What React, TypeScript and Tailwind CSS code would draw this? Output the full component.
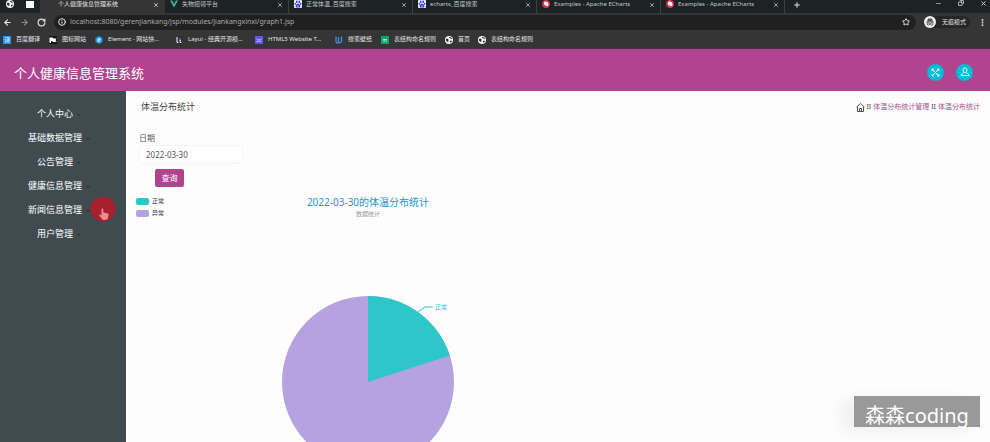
import type { ReactNode } from 'react';
import { ArrowLeft, ArrowRight, RotateCw, Info, Star, EllipsisVertical, Minus, Copy, X, Plus } from 'lucide-react';

function Globe() {
  return (
    <svg viewBox="0 0 16 16" className="size-2 shrink-0" aria-hidden="true">
      <circle cx="8" cy="8" r="8" fill="#f1f1f1" />
      <path d="M2 6c3-1 5 0 5 2s-1 2 0 4c-3 0-6-2-5-6zM8 2c0 2 2 2 3 3s2 1 3 0c-1-2-3-3-6-3zM10 10c1-1 3-1 4 0-1 2-2 3-4 3z" fill="#303030" />
    </svg>
  );
}

function Paw() {
  return (
    <svg viewBox="0 0 16 16" className="size-2 shrink-0" aria-hidden="true">
      <rect width="16" height="16" rx="2" fill="#f3f4ff" />
      <g fill="#3434dd">
        <ellipse cx="5.5" cy="3.5" rx="1.7" ry="2.4" />
        <ellipse cx="10.5" cy="3.5" rx="1.7" ry="2.4" />
        <ellipse cx="2.6" cy="7.5" rx="1.6" ry="2.2" />
        <ellipse cx="13.4" cy="7.5" rx="1.6" ry="2.2" />
        <path d="M8 7c2 0 5 3.500 5 6 0 2-3 2-5 2s-5 0-5-2c0-2.500 3-6 5-6z" />
      </g>
      <circle cx="8" cy="12" r="1.500" fill="#f3f4ff" />
    </svg>
  );
}

function Vue() {
  return (
    <svg viewBox="0 0 16 16" className="size-2 shrink-0" aria-hidden="true">
      <path d="M0 1h4l4 7 4-7h4L8 15z" fill="#41b883" />
      <path d="M4 1h2.500L8 4l1.500-3H12L8 8z" fill="#35495e" />
    </svg>
  );
}

function Apache() {
  return (
    <svg viewBox="0 0 16 16" className="size-2 shrink-0" aria-hidden="true">
      <circle cx="8" cy="8" r="8" fill="#d62f50" />
      <path d="M7 3c4 0 6 3 6 6s-2 4-4 3-5-2-5-5 1-4 3-4z" fill="#fff" />
    </svg>
  );
}

const tabs: { title: string; icon: ReactNode }[] = [
  { title: '失物招领平台', icon: <Vue /> },
  { title: '正常体温_百度搜索', icon: <Paw /> },
  { title: 'echarts_百度搜索', icon: <Paw /> },
  { title: 'Examples - Apache ECharts', icon: <Apache /> },
  { title: 'Examples - Apache ECharts', icon: <Apache /> },
];

const bookmarks: { title: string; width: string; icon: ReactNode }[] = [
  {
    title: '百度翻译',
    width: 'w-[46px]',
    icon: <span className="flex size-2 shrink-0 items-center justify-center bg-[#2492ef] text-[6px] leading-none">译</span>,
  },
  {
    title: '图标网站',
    width: 'w-[46px]',
    icon: (
      <svg viewBox="0 0 16 16" className="size-2 shrink-0" aria-hidden="true">
        <rect width="16" height="16" fill="#161616" />
        <path d="M1 3h6l2 2h6l-2 3 2 4H8l-2-2H4v4H1z" fill="#fff" />
      </svg>
    ),
  },
  {
    title: 'Element - 网站快...',
    width: 'w-20',
    icon: (
      <svg viewBox="0 0 16 16" className="size-2 shrink-0" aria-hidden="true">
        <path d="M8 0l7 4v8l-7 4-7-4V4z" fill="#1f9cf0" />
        <path d="M11 5L6 6v5l5-1M6 8l5-1" fill="none" stroke="#fff" strokeWidth="1.500" />
      </svg>
    ),
  },
  {
    title: 'Layui - 经典开源模...',
    width: 'w-20',
    icon: (
      <svg viewBox="0 0 16 16" className="size-2 shrink-0" aria-hidden="true">
        <rect width="16" height="16" fill="#2b3038" />
        <path d="M4 2v11h3M10 5v2M9 9h2l-1 4h3" fill="none" stroke="#fff" strokeWidth="2" />
      </svg>
    ),
  },
  {
    title: 'HTML5 Website T...',
    width: 'w-20',
    icon: (
      <svg viewBox="0 0 16 16" className="size-2 shrink-0" aria-hidden="true">
        <rect width="16" height="16" fill="#6253e0" />
        <path d="M3 5l3 4 2-3 2 3 3-4M3 11h10" fill="none" stroke="#c9c2ff" strokeWidth="1.500" />
      </svg>
    ),
  },
  {
    title: '搜索壁纸',
    width: 'w-[46px]',
    icon: (
      <svg viewBox="0 0 16 16" className="size-2 shrink-0" aria-hidden="true">
        <path d="M2 1v10c0 4 5 4 5 0V2M7 11c0 4 6 3 6-1V1" fill="none" stroke="#3d94e8" strokeWidth="2.500" />
      </svg>
    ),
  },
  {
    title: '表结构命名规则',
    width: 'w-16',
    icon: (
      <svg viewBox="0 0 16 16" className="size-2 shrink-0" aria-hidden="true">
        <rect width="16" height="16" rx="1" fill="#10a567" />
        <path d="M4 7h8M4 10h8" stroke="#d9ffe9" strokeWidth="1.500" />
      </svg>
    ),
  },
  { title: '首页', width: 'w-[33px]', icon: <Globe /> },
  { title: '表结构命名规则', width: 'w-16', icon: <Globe /> },
];

function BrowserChrome() {
  return (
    <div className="shrink-0 bg-[#353536] text-[#e4e4e4]">
      <div className="flex h-[13px] bg-[#1d2225]">
        <div className="flex w-10 shrink-0 items-start gap-3 pl-[6px]">
          <Globe />
          <span className="mt-px h-[7px] w-2 bg-white" />
        </div>
        <div className="flex h-[13px] w-[125px] shrink-0 items-start justify-between bg-[#353536] pr-[6px] pl-[18px] text-[6px] leading-[9px]">
          <span>个人健康信息管理系统</span>
          <button aria-label="关闭标签页" className="pt-[2px]"><X className="size-[6px]" strokeWidth={3} /></button>
        </div>
        {tabs.map((tab, i) => (
          <div key={i} className="flex w-[124px] min-w-0 items-start border-r border-[#3b4043] pr-[5px] pl-[5px] text-[6px] leading-[9px] text-[#c3c6c8]">
            {tab.icon}
            <span className="ml-1 grow truncate">{tab.title}</span>
            <button aria-label="关闭标签页" className="pt-[2px]"><X className="size-[6px]" strokeWidth={3} /></button>
          </div>
        ))}
        <button aria-label="新建标签页" className="ml-2 flex h-[9px] items-center"><Plus className="size-2" strokeWidth={3} /></button>
        <div className="ml-auto flex h-[6px] items-center gap-4 pr-[3px]">
          <button aria-label="最小化"><Minus className="size-[7px]" /></button>
          <button aria-label="还原"><Copy className="size-[6px] -scale-x-100" strokeWidth={3} /></button>
          <button aria-label="关闭"><X className="size-[7px]" strokeWidth={3} /></button>
        </div>
      </div>
      <div className="flex h-[18px] items-center gap-2 px-[3px]">
        <button aria-label="后退"><ArrowLeft className="size-[9px]" strokeWidth={3} /></button>
        <button aria-label="前进" className="text-[#88898a]"><ArrowRight className="size-[9px]" strokeWidth={3} /></button>
        <button aria-label="刷新"><RotateCw className="size-[9px]" strokeWidth={3} /></button>
        <div className="flex h-[15px] grow items-center gap-1 rounded-full bg-[#202020] pr-[6px] pl-1">
          <Info className="size-2" strokeWidth={3} />
          <input
            aria-label="地址"
            readOnly
            value="localhost:8080/gerenjiankang/jsp/modules/jiankangxinxi/graph1.jsp"
            className="min-w-0 grow bg-transparent text-[7px] leading-[12px] text-[#a9aaab] outline-none"
          />
          <Star className="size-2" strokeWidth={3} />
        </div>
        <button className="flex h-3 items-center gap-[6px] rounded-full bg-[#262627] pr-1 text-[6px]">
          <svg viewBox="0 0 24 24" className="size-3" aria-hidden="true">
            <circle cx="12" cy="12" r="12" fill="#f4f4f4" />
            <path d="M8 5h8l2 6H6z" fill="#555" />
            <path d="M4 12h16" stroke="#333" strokeWidth="1.500" />
            <circle cx="8.500" cy="16" r="2.500" fill="none" stroke="#333" strokeWidth="1.500" />
            <circle cx="15.500" cy="16" r="2.500" fill="none" stroke="#333" strokeWidth="1.500" />
          </svg>
          无痕模式
        </button>
        <button aria-label="菜单"><EllipsisVertical className="size-[9px]" strokeWidth={3} /></button>
      </div>
      <nav className="flex h-[18px] items-center border-b border-[#4b3147] pl-[3px] text-[6px]">
        {bookmarks.map((b, i) => (
          <a key={i} href="#" className={`flex shrink-0 items-center gap-[5px] whitespace-nowrap ${b.width}`}>
            {b.icon}
            {b.title}
          </a>
        ))}
      </nav>
    </div>
  );
}

const menu = ['个人中心', '基础数据管理', '公告管理', '健康信息管理', '新闻信息管理', '用户管理'];

function PointerSpot() {
  return (
    <svg viewBox="0 0 26 26" className="absolute top-[105px] left-[90px] size-[26px]" aria-hidden="true">
      <circle cx="13" cy="13" r="12.500" fill="#a81f2e" />
      <path d="M11.500 13.500c0-1.200 1.800-1.200 1.800 0v3l4 .8c1.200.3 1.400 1 1.200 2l-.8 3.700c-1.500 1-3.500 1.200-5 .8L9.500 20c-.8-1 .2-1.800 1-1.300l1 .8z" fill="#f08a8c" />
    </svg>
  );
}

function Sidebar() {
  return (
    <aside className="relative w-[126px] shrink-0 bg-[#404b50] pt-[11px]">
      <ul>
        {menu.map((name) => (
          <li key={name}>
            <button className="flex h-6 w-full items-center justify-center pr-4 text-[9px] text-white">
              <span className="relative">
                {name}
                <span className="absolute top-1/2 left-full ml-1 border-x-2 border-t-2 border-x-transparent border-t-[#2b3337]" />
              </span>
            </button>
          </li>
        ))}
      </ul>
      <PointerSpot />
    </aside>
  );
}

const data = [
  { name: '正常', share: 0.2, color: '#2ec7c9', swatch: 'bg-[#2ec7c9]' },
  { name: '异常', share: 0.8, color: '#b6a2de', swatch: 'bg-[#b6a2de]' },
];

function Pie() {
  const r = 86;
  const a = data[0].share * 2 * Math.PI;
  return (
    <svg viewBox="0 0 464 190" className="block h-[190px] w-[464px]" role="img" aria-label="体温分布统计">
      <circle cx="232" cy="98" r={r} fill={data[1].color} />
      <path d={`M232 98V12A${r} ${r} 0 0 1 ${232 + r * Math.sin(a)} ${98 - r * Math.cos(a)}Z`} fill={data[0].color} />
      <path d="M282 28L289 23H297" fill="none" stroke={data[0].color} />
      <text x="299" y="25" fontSize="6" fill={data[0].color}>正常</text>
    </svg>
  );
}

function Chart() {
  return (
    <section className="w-[464px]">
      <div className="grid grid-cols-[1fr_auto_1fr]">
        <ul className="text-[6px] text-[#333]">
          {data.map((d) => (
            <li key={d.name} className="flex h-3 items-center gap-[3px]">
              <span className={`h-[7px] w-[13px] rounded-xs ${d.swatch}`} />
              {d.name}
            </li>
          ))}
        </ul>
        <div className="text-center">
          <h2 className="text-[10px] leading-[15px] text-[#1f97cf]">2022-03-30的体温分布统计</h2>
          <p className="text-[6px] leading-[9px] text-[#999]">数据统计</p>
        </div>
      </div>
      <div className="pt-[65px]">
        <Pie />
      </div>
    </section>
  );
}

function Content() {
  return (
    <main className="min-w-0 grow overflow-hidden bg-[#fefdfe] px-[10px] pt-2">
      <div className="flex h-4 items-center justify-between pl-[5px]">
        <h1 className="text-[9px] text-[#444]">体温分布统计</h1>
        <nav className="flex items-center gap-[2px] text-[7px] text-[#a9508d]">
          <a href="#" aria-label="首页" className="text-[#4b5257]">
            <svg viewBox="0 0 18 18" className="size-[9px]" fill="none" stroke="currentColor" strokeWidth="2" aria-hidden="true">
              <path d="M1 8l8-7 8 7M3 7v10h12V7M7 17v-6h4v6" />
            </svg>
          </a>
          <span className="text-[#444]">II</span>
          <a href="#">体温分布统计管理</a>
          <span className="text-[#444]">II</span>
          <a href="#">体温分布统计</a>
        </nav>
      </div>
      <form className="pt-4 pl-[3px]" onSubmit={(e) => e.preventDefault()}>
        <label htmlFor="date" className="block text-[8px] leading-[14px] text-[#555]">日期</label>
        <input
          id="date"
          defaultValue="2022-03-30"
          className="block h-[19px] w-[104px] rounded-sm border border-[#f7f4f8] bg-white px-[6px] text-[8px] text-[#555] outline-none"
        />
        <button className="mt-[5px] ml-4 block h-[18px] w-[29px] rounded-xs bg-[#b0448f] text-[8px] text-white">查询</button>
      </form>
      <div className="pt-2">
        <Chart />
      </div>
    </main>
  );
}

export default function App() {
  return (
    <div className="relative flex h-screen flex-col overflow-hidden font-['Noto_Sans','Noto_Sans_CJK_SC',sans-serif]">
      <BrowserChrome />
      <header className="flex h-[42px] shrink-0 items-center justify-between bg-[#b0448f] px-[14px]">
        <div className="pt-2 text-[13px] text-white">个人健康信息管理系统</div>
        <div className="flex gap-3 pt-1 pr-[3px]">
          <button aria-label="全屏" className="flex size-[17px] items-center justify-center rounded-full bg-[#00bcd4] text-white">
            <svg viewBox="0 0 18 18" className="size-[9px]" fill="none" stroke="currentColor" strokeWidth="2" aria-hidden="true">
              <path d="M2 6V2h4M12 2h4v4M16 12v4h-4M6 16H2v-4M2 2l14 14M16 2L2 16" />
            </svg>
          </button>
          <button aria-label="个人中心" className="flex size-[17px] items-center justify-center rounded-full bg-[#00bcd4] text-white">
            <svg viewBox="0 0 20 20" className="size-[10px]" fill="none" stroke="currentColor" strokeWidth="2" aria-hidden="true">
              <path d="M10 2c-3 0-4 2-4 4 0 3 2 5 4 5s4-2 4-5c0-2-1-4-4-4zM7 11c0 3-5 2-5 6h16c0-4-5-3-5-6" />
            </svg>
          </button>
        </div>
      </header>
      <div className="flex min-h-0 grow">
        <Sidebar />
        <Content />
      </div>
      <div className="absolute right-[10px] bottom-[15px] flex h-[31px] w-[126px] items-center justify-center bg-[#999] pt-2 text-[20px] leading-none text-white shadow-[-12px_4px_16px_rgba(0,0,0,0.06)]">
        森森coding
      </div>
    </div>
  );
}
